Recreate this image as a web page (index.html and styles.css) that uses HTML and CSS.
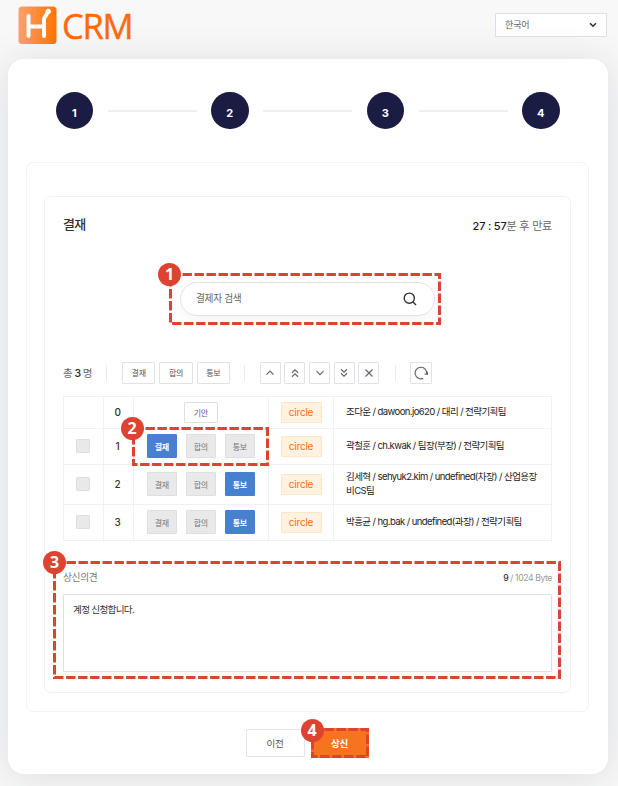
FILE: index.html
```html
<!DOCTYPE html>
<html lang="ko">
<head>
<meta charset="utf-8">
<title>H CRM</title>
<link rel="stylesheet" href="styles.css">
</head>
<body>
<header class="top">
  <div class="logo">
    <svg width="39" height="39" viewBox="0 0 39 39">
      <defs><linearGradient id="lg"><stop offset="0" stop-color="#ffa070"/><stop offset="1" stop-color="#ff7400"/></linearGradient></defs>
      <rect x=".5" y=".5" width="38" height="37.5" rx="3.5" fill="url(#lg)"/>
      <path d="M10.5 10V30M10.5 20.5H26M26 30V12.5L30 6" fill="none" stroke="#fff" stroke-width="4" stroke-linecap="round" stroke-linejoin="round"/>
      <circle cx="30.3" cy="5.3" r="2.6" fill="#fff"/>
    </svg>
    <span class="logo-text">CRM</span>
  </div>
  <div class="lang"><span>한국어</span>
    <svg width="8" height="6" viewBox="0 0 8 6"><path d="M1 1.2L4 4.2L7 1.2" fill="none" stroke="#333" stroke-width="1.6"/></svg>
  </div>
</header>
<main class="card">
  <div class="steps">
    <b>1</b><i></i><b>2</b><i></i><b>3</b><i></i><b>4</b>
  </div>
  <section class="outer">
    <div class="panel">
      <div class="head"><h1>결재</h1><p class="timer"><strong>27 : 57</strong>분 후 만료</p></div>
      <div class="search"><span>결제자 검색</span>
        <svg width="14" height="14" viewBox="0 0 14 14" fill="none" stroke="#333" stroke-width="1.4"><circle cx="6.3" cy="6.2" r="5.1"/><path d="M10 10L13 13"/></svg>
        <div class="callout c1"><svg width="272" height="52"><path d="M1.5 1.5H270.5V50.5H1.5Z"/></svg><em>1</em></div>
      </div>
      <div class="tools">
        <span class="count">총 <strong>3</strong> 명</span>
        <span class="sep"></span>
        <div class="group g1"><button>결재</button><button>합의</button><button>통보</button></div>
        <span class="sep"></span>
        <div class="group g2">
          <button><svg viewBox="0 0 10 10"><path d="M1.5 6.7L5 3.2L8.5 6.7"/></svg></button>
          <button><svg viewBox="0 0 10 10"><path d="M2 4.7L5 1.9L8 4.7M2 8.7L5 5.9L8 8.7"/></svg></button>
          <button><svg viewBox="0 0 10 10"><path d="M1.5 3.2L5 6.7L8.5 3.2"/></svg></button>
          <button><svg viewBox="0 0 10 10"><path d="M2 1.3L5 4.1L8 1.3M2 5.3L5 8.1L8 5.3"/></svg></button>
          <button><svg viewBox="0 0 10 10"><path d="M1.5 1.5L8.5 8.5M8.5 1.5L1.5 8.5"/></svg></button>
        </div>
        <span class="sep"></span>
        <button class="refresh"><svg width="14" height="14" viewBox="0 0 14 14"><path d="M9.2 12.4A5.8 5.8 0 1 1 12.6 8.2"/><path d="M10.6 8L13.3 8.3L13.2 5.6" /></svg></button>
      </div>
      <div class="table">
        <div class="row r0"><div></div><div class="no">0</div><div class="types"><span class="draft">기안</span></div><div><span class="tag">circle</span></div><div class="who"><span>조다운 / dawoon.jo620 / 대리 / 전략기획팀</span></div></div>
        <div class="row r1"><div><span class="check"></span></div><div class="no">1</div><div class="types"><span class="on">결재</span><span>합의</span><span>통보</span>
          <div class="callout c2"><svg width="137" height="39"><path d="M1.5 1.5H135.5V37.5H1.5Z"/></svg><em>2</em></div></div><div><span class="tag">circle</span></div><div class="who"><span>곽철훈 / ch.kwak / 팀장(부장) / 전략기획팀</span></div></div>
        <div class="row r2"><div><span class="check"></span></div><div class="no">2</div><div class="types"><span>결재</span><span>합의</span><span class="on">통보</span></div><div><span class="tag">circle</span></div><div class="who"><span>김세혁 / sehyuk2.kim / undefined(차장) / 산업용장<br>비CS팀</span></div></div>
        <div class="row r3"><div><span class="check"></span></div><div class="no">3</div><div class="types"><span>결재</span><span>합의</span><span class="on">통보</span></div><div><span class="tag">circle</span></div><div class="who"><span>박흥균 / hg.bak / undefined(과장) / 전략기획팀</span></div></div>
      </div>
      <div class="opinion">
        <div class="opinion-head"><span>상신의견</span><span class="bytes"><strong>9</strong> / 1024 Byte</span></div>
        <div class="memo">계정 신청합니다.</div>
        <div class="callout c3"><svg width="508" height="118"><path d="M1.5 1.5H506.5V116.5H1.5Z"/></svg><em>3</em></div>
      </div>
    </div>
  </section>
  <div class="actions">
    <button class="prev">이전</button>
    <div class="submit">상신
      <div class="callout c4"><svg width="58" height="30"><path d="M1.5 1.5H56.5V28.5H1.5Z"/></svg><em>4</em></div>
    </div>
  </div>
</main>
</body>
</html>
```

FILE: styles.css
```css
* { box-sizing: border-box; }
body {
  margin: 0; width: 618px; height: 786px; overflow: hidden;
  background: #f8f8f8;
  font-family: Inter, "Noto Sans CJK KR", sans-serif;
  font-size: 9.5px; letter-spacing: -.3px; color: #333;
}
h1, p { margin: 0; }
button { font: inherit; letter-spacing: inherit; padding: 0 0 1px; margin: 0; background: #fff; color: #555; border: 1px solid #dfe2e7; border-radius: 1px; display: flex; align-items: center; justify-content: center; }
.top { height: 59px; display: flex; justify-content: space-between; align-items: flex-start; padding: 6px 11px 0 18px; }
.logo { display: flex; }
.logo-text { font: 34.5px/39px "Open Sans", sans-serif; letter-spacing: -1.3px; color: #ff6a0c; margin-left: 5px; -webkit-text-stroke: .4px #ff6a0c; }
.lang { margin-top: 7px; width: 112px; height: 24px; border: 1px solid #dde1e7; background: #fff; display: flex; align-items: center; justify-content: space-between; padding: 0 9px 1px 9px; color: #666; font-size: 9px; letter-spacing: -.1px; }
.card { position: relative; margin: 0 10.5px 0 7.5px; height: 715px; background: #fff; border-radius: 16px; box-shadow: 0 3px 38px rgba(30, 40, 65, .13); padding: 33px 18.5px 0; }
.steps { display: flex; align-items: center; justify-content: space-between; height: 37px; margin: 0 29.5px 0 29.5px; }
.steps b { width: 37.5px; height: 37.5px; border-radius: 50%; background: #1b1c43; color: #fff; font-size: 11px; display: flex; align-items: center; justify-content: center; padding-top: 4px; letter-spacing: 0; }
.steps i { width: 89px; height: 2px; background: #eeeff1; }
.outer { margin: 33px 0 0; height: 550px; width: 563px; border: 1px solid #f2f3f4; border-radius: 7px; padding: 33px 17px 0; }
.panel { width: 527px; height: 497px; border: 1px solid #f0f1f3; border-radius: 7px; padding: 0 18px; }
.head { height: 56px; display: flex; justify-content: space-between; align-items: center; }
.head h1 { font-size: 13px; font-weight: 500; letter-spacing: -.6px; color: #333; padding-bottom: 4px; }
.timer { font-size: 11px; color: #666; letter-spacing: -.2px; padding-bottom: 1px; }
.timer strong { font-weight: 500; color: #222; }
.search { position: relative; width: 255px; height: 34px; margin: 29px 0 0 117px; border: 1px solid #dfe2e8; border-radius: 17px; display: flex; align-items: center; justify-content: space-between; padding: 0 17px 1px 15px; box-shadow: 0 6px 16px rgba(0, 0, 0, .04); color: #666; font-size: 9.7px; letter-spacing: -.3px; }
.search > span { padding-bottom: 2px; }
.search > svg { margin-top: 1px; }
.tools { display: flex; align-items: center; height: 22px; margin-top: 46px; }
.count { width: 43px; font-size: 10.5px; color: #666; white-space: nowrap; letter-spacing: -.6px; padding-bottom: 2px; }
.count strong { color: #222; font-weight: 500; }
.sep { width: 1px; height: 16px; background: #e9eaec; }
.group { display: flex; }
.group button { height: 22px; }
.g1 { gap: 4px; margin: 0 14px 0 15px; }
.g1 button { width: 33.3px; font-size: 8px; }
.g2 { gap: 3.6px; margin: 0 16px 0 15px; }
.g2 button { width: 21px; padding: 0; }
.g2 svg { width: 10px; height: 10px; }
.tools svg { fill: none; stroke: #666; stroke-width: 1.2; }
.refresh { width: 22px; height: 22px; margin-left: 14px; padding: 0; }
.table { width: 489px; margin-top: 12px; border-left: 1px solid #f0f1f2; border-top: 1px solid #f0f1f2; }
.row { display: grid; grid-template-columns: 39.5px 30px 135.5px 65px 218px; }
.row > div { border-right: 1px solid #f0f1f2; border-bottom: 1px solid #f0f1f2; display: flex; align-items: center; justify-content: center; }
.r0 { height: 32px; }
.r1 { height: 36px; }
.r2 { height: 40px; }
.r3 { height: 36px; }
.row > .no { font-size: 10px; font-weight: 500; padding: 0 1px 2px 0; }
.row > div:nth-child(4) { padding-bottom: 1px; }
.check { width: 14px; height: 14px; background: #e9e9e9; border: 1px solid #dcdfe4; border-radius: 1px; margin-top: -1px; }
.types { position: relative; gap: 9px; padding-bottom: 1px; }
.types > span { width: 30px; height: 24px; background: #e9e9e9; border: 1px solid #dcdfe4; border-radius: 1px; font-size: 8px; color: #777; display: flex; align-items: center; justify-content: center; }
.types > .on { background: #4680cf; border-color: #4680cf; color: #fff; font-weight: 700; }
.types > .draft { width: 34px; height: 21px; background: #fff; color: #666; }
.tag { width: 41px; height: 21px; background: #fff2e0; border: 1px solid #ffe5c5; border-radius: 1px; color: #fa6d20; font-size: 10px; line-height: 18px; text-align: center; letter-spacing: -.2px; }
.row > .who { justify-content: flex-start; padding: 0 0 1px 12px; font-size: 9.5px; line-height: 14.5px; color: #222; letter-spacing: -.58px; white-space: nowrap; }
.opinion { position: relative; margin-top: 28px; }
.opinion-head { height: 20px; display: flex; justify-content: space-between; color: #777; font-size: 9.7px; line-height: 18px; }
.bytes { font-size: 8.7px; color: #999; line-height: 18px; letter-spacing: -.42px; }
.bytes strong { color: #333; font-weight: 500; }
.memo { margin-top: 5px; width: 489px; height: 78px; border: 1px solid #dde1e6; border-radius: 1px; padding: 7px 9px; line-height: 16px; color: #333; font-size: 9.6px; letter-spacing: -.7px; }
.actions { display: flex; gap: 6px; margin: 17px 0 0 219.5px; }
.actions button { width: 59px; height: 28px; border-color: #dfe3ea; }
.submit { position: relative; margin-top: -1px; width: 58px; height: 30px; padding-bottom: 1px; background: #f77320; color: #fff; font-weight: 700; display: flex; align-items: center; justify-content: center; }
.callout { position: absolute; z-index: 2; font-size: 0; }
.callout svg { display: block; fill: none; stroke: #dd4331; stroke-width: 3; stroke-dasharray: 9.4 2.6; }
.callout em { position: absolute; left: -11px; top: -10px; width: 23px; height: 23px; border-radius: 50%; background: #dd4331; color: #fff; font: 700 16px/22px "Open Sans", sans-serif; letter-spacing: 0; text-align: center; }
.c1 { left: -12px; top: -10px; }
.c2 { left: -2px; top: -2px; }
.c3 { left: -10px; top: -8px; }
.c3 em { left: -10px; }
.c4 { left: 0; top: 0; }
.c4 em { left: -10px; top: -9px; }
```
